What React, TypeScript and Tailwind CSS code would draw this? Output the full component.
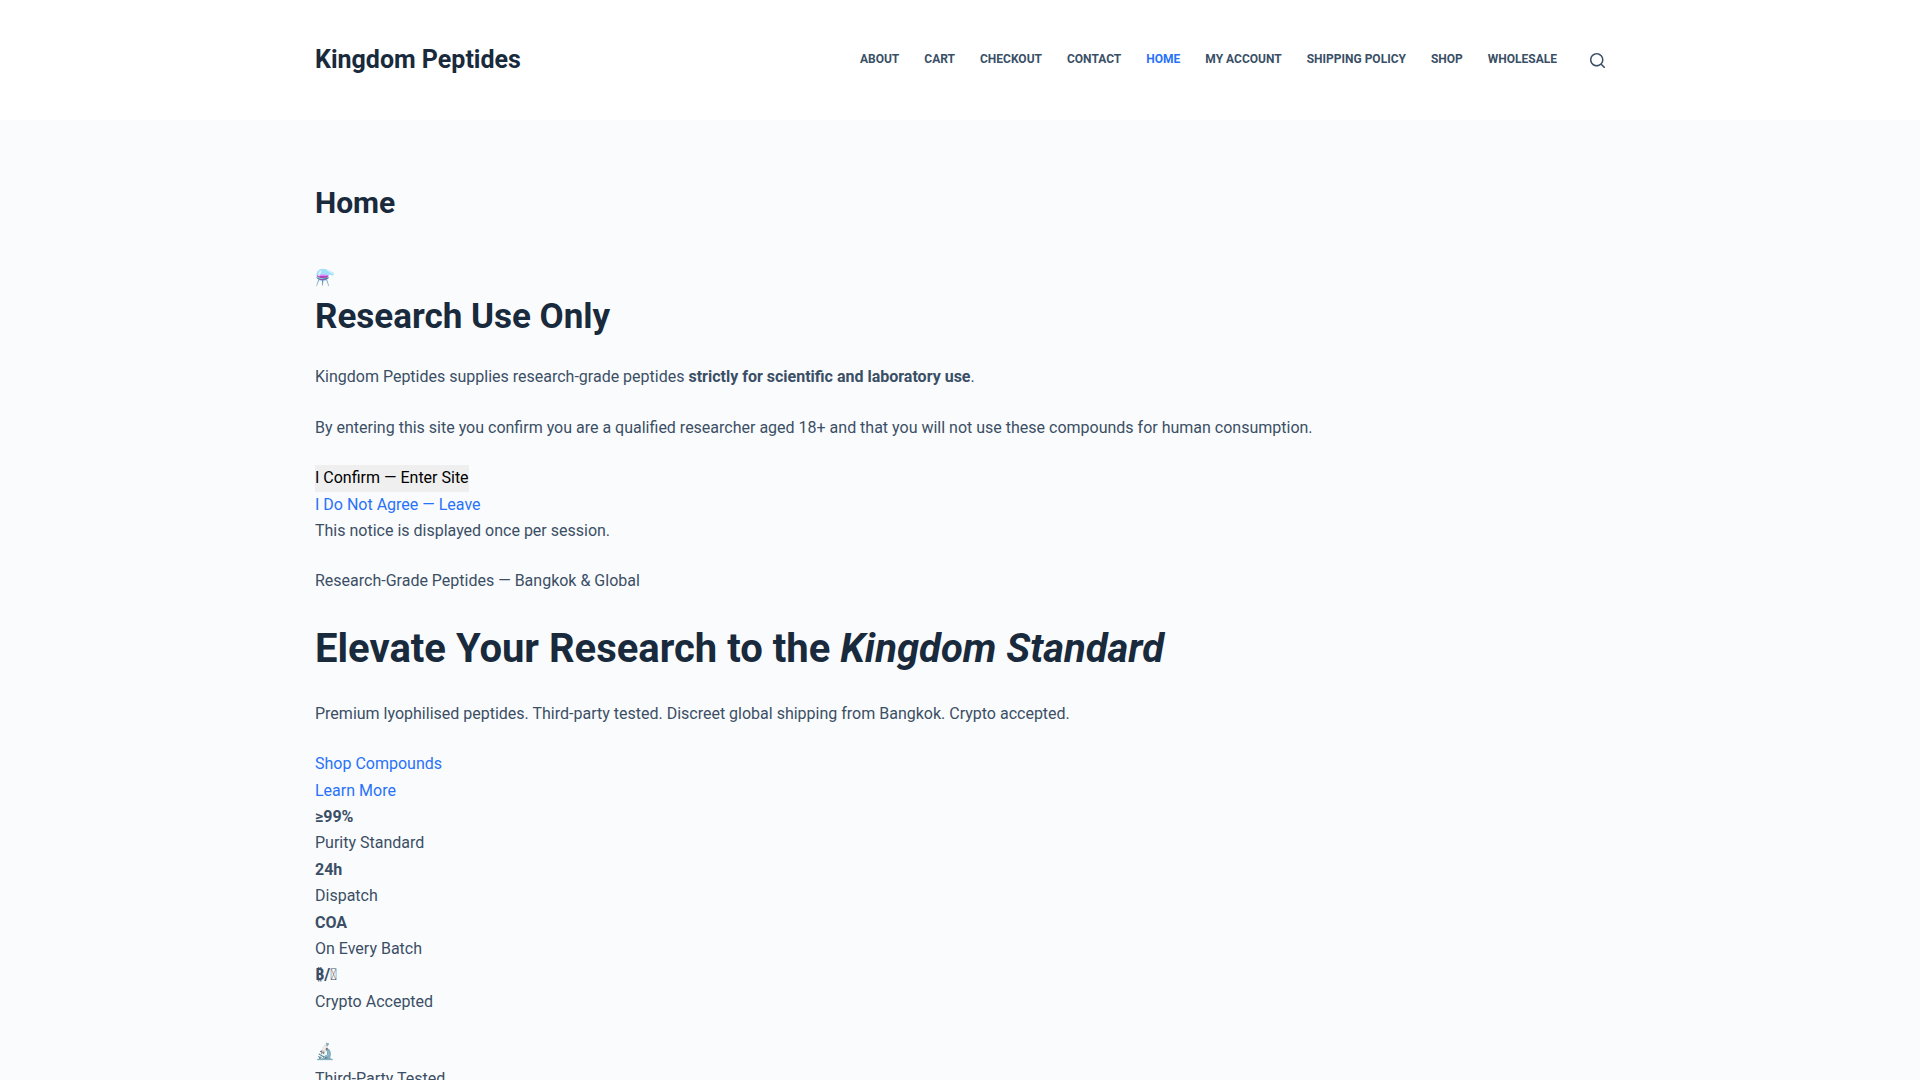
const navItems = ['About', 'Cart', 'Checkout', 'Contact', 'Home', 'My Account', 'Shipping Policy', 'Shop', 'Wholesale'];

export default function App() {
  return (
    <div className="h-[1080px] overflow-hidden bg-[#fafbfc] font-['Roboto',sans-serif] text-base leading-[26.4px] text-[#3a4f66] antialiased">
      {/* Header */}
      <header className="h-[120px] bg-white">
        <div className="mx-auto flex h-full w-[1290px] items-center justify-between">
          <a className="text-[25px] font-bold text-[#192a3d]">Kingdom Peptides</a>
          <div className="mb-[2px] flex items-center">
            <nav className="flex items-center gap-[25px]">
              {navItems.map(item => (
                <a
                  key={item}
                  className={`text-xs font-bold uppercase ${item === 'Home' ? 'text-[#2872fa]' : 'text-[#3a4f66]'}`}
                >
                  {item}
                </a>
              ))}
            </nav>
            <svg className="ml-[33px] mt-[2px] h-[15px] w-[15px] text-[#3a4f66]" viewBox="0 0 15 15" fill="currentColor">
              <path d="M14.8,13.7L12,11c0.9-1.2,1.5-2.6,1.5-4.2c0-3.7-3-6.8-6.8-6.8S0,3,0,6.8s3,6.8,6.8,6.8c1.6,0,3.1-0.6,4.2-1.5l2.8,2.8c0.1,0.1,0.3,0.2,0.5,0.2s0.4-0.1,0.5-0.2C15.1,14.5,15.1,14,14.8,13.7z M1.5,6.8c0-2.9,2.4-5.2,5.2-5.2S12,3.9,12,6.8S9.6,12,6.8,12S1.5,9.6,1.5,6.8z" />
            </svg>
          </div>
        </div>
      </header>

      {/* Page content */}
      <main className="mx-auto w-[1290px]">
        <h1 className="pt-[63px] text-[30px] font-bold leading-[39px] text-[#192a3d]">Home</h1>

        <p className="mt-[43px] text-[16px]">⚗️</p>
        <h2 className="text-[35px] font-bold leading-[52px] text-[#192a3d]">Research Use Only</h2>
        <p className="mt-[21px]">
          Kingdom Peptides supplies research-grade peptides <strong className="font-bold">strictly for scientific and laboratory use</strong>.
        </p>
        <p className="mt-[24px]">By entering this site you confirm you are a qualified researcher aged 18+ and that you will not use these compounds for human consumption.</p>

        <div className="mt-[24px]">
          <button className="block bg-[#efefef] text-black">I Confirm — Enter Site</button>
          <a className="block text-[#2872fa]">I Do Not Agree — Leave</a>
          <p>This notice is displayed once per session.</p>
        </div>

        <p className="mt-[24px]">Research-Grade Peptides — Bangkok &amp; Global</p>

        <h1 className="mt-[24px] text-[40px] font-bold leading-[60px] text-[#192a3d]">
          Elevate Your Research to the <em>Kingdom Standard</em>
        </h1>
        <p className="mt-[22px]">Premium lyophilised peptides. Third-party tested. Discreet global shipping from Bangkok. Crypto accepted.</p>

        <div className="mt-[23.9px]">
          <a className="block text-[#2872fa]">Shop Compounds</a>
          <a className="block text-[#2872fa]">Learn More</a>
          <p className="font-bold">≥99%</p>
          <p>Purity Standard</p>
          <p className="font-bold">24h</p>
          <p>Dispatch</p>
          <p className="font-bold">COA</p>
          <p>On Every Batch</p>
          <p className="font-bold">
            <span className="font-['Noto_Sans',sans-serif] leading-none">₿</span>/{'\uE000'}
          </p>
          <p>Crypto Accepted</p>
        </div>

        <p className="mt-[24px]">🔬</p>
        <p>Third-Party Tested</p>
      </main>
    </div>
  );
}
